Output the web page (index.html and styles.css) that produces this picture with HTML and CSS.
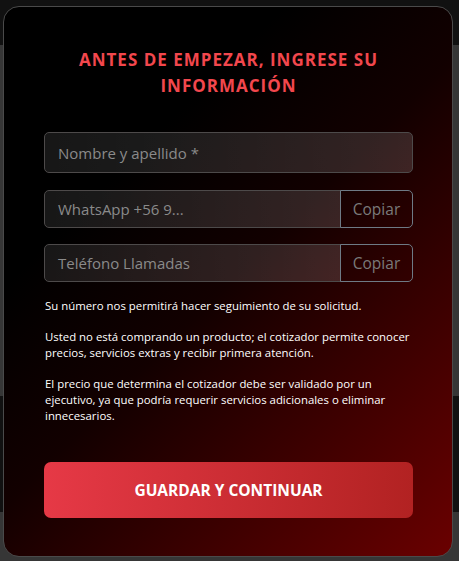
FILE: index.html
```html
<!DOCTYPE html>
<html lang="es">
<head>
<meta charset="utf-8">
<link rel="stylesheet" href="styles.css">
</head>
<body>
<div class="modal">
  <h1 class="title">ANTES DE EMPEZAR, INGRESE SU INFORMACIÓN</h1>
  <div class="fields">
    <div class="field field-tall"><span class="ph">Nombre y apellido *</span></div>
    <div class="group">
      <div class="field"><span class="ph">WhatsApp +56 9...</span></div>
      <div class="copy">Copiar</div>
    </div>
    <div class="group">
      <div class="field"><span class="ph">Teléfono Llamadas</span></div>
      <div class="copy">Copiar</div>
    </div>
  </div>
  <div class="notes">
    <p>Su número nos permitirá hacer seguimiento de su solicitud.</p>
    <p>Usted no está comprando un producto; el cotizador permite conocer precios, servicios extras y recibir primera atención.</p>
    <p>El precio que determina el cotizador debe ser validado por un ejecutivo, ya que podría requerir servicios adicionales o eliminar innecesarios.</p>
  </div>
  <div class="btn">GUARDAR Y CONTINUAR</div>
</div>
</body>
</html>
```
FILE: styles.css
```css
html, body { margin: 0; padding: 0; }
body {
  width: 459px;
  height: 561px;
  overflow: hidden;
  background: linear-gradient(to bottom, #111 0, #111 45px, #363636 45px, #363636 396px, #111 396px, #111 512px, #363636 512px);
  font-family: "Open Sans", "Noto Sans", sans-serif;
  padding: 6px 6px 4px 3px;
  box-sizing: border-box;
}
.modal {
  box-sizing: border-box;
  width: 450px;
  height: 551px;
  border: 1px solid #4a4a4a;
  border-radius: 16px;
  background: linear-gradient(135deg, #000 0%, #000 28%, #120000 50%, #6a0000 100%);
  padding: 40px 39px 0 40px;
  display: flex;
  flex-direction: column;
}
.title {
  margin: 0 20px;
  color: #f2474d;
  font-size: 17px;
  font-weight: 700;
  letter-spacing: 1px;
  line-height: 26px;
  text-align: center;
}
.fields {
  margin-top: 33px;
  display: flex;
  flex-direction: column;
  gap: 16px;
}
.group {
  display: flex;
  height: 38px;
}
.field {
  box-sizing: border-box;
  flex: 1;
  border: 1px solid #4d4a4a;
  border-radius: 5px;
  background: linear-gradient(90deg, rgba(255,255,255,0.09), rgba(255,255,255,0.14));
  display: flex;
  align-items: center;
  padding-left: 13px;
}
.group .field {
  border-top-right-radius: 0;
  border-bottom-right-radius: 0;
}
.field-tall { flex: none; height: 41px; margin-bottom: 1px; }
.ph {
  color: #8a8a8a;
  font-size: 15px;
}
.copy {
  box-sizing: border-box;
  width: 73px;
  border: 1px solid #6e7a85;
  border-radius: 0 5px 5px 0;
  margin-left: -1px;
  display: flex;
  align-items: center;
  justify-content: center;
  color: #7a7a7a;
  font-size: 15.5px;
}
.notes {
  margin-top: 16px;
  color: #fff;
  font-size: 11.4px;
  line-height: 16px;
  padding-left: 1px;
}
.notes p { margin: 0 0 15px 0; }
.btn {
  margin-top: 23px;
  height: 56px;
  border-radius: 7px;
  background: linear-gradient(90deg, #e63946, #b22222);
  color: #fff;
  font-weight: 700;
  font-size: 15.5px;
  display: flex;
  align-items: center;
  justify-content: center;
}
```
